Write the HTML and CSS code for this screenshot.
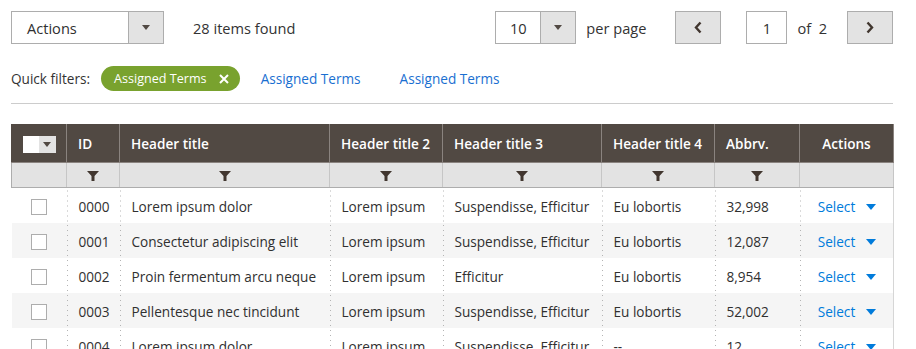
FILE: index.html
```html
<!DOCTYPE html>
<html lang="en">
<head>
<meta charset="UTF-8">
<meta name="viewport" content="width=device-width, initial-scale=1.0">
<title>Data Grid</title>
<link rel="stylesheet" href="styles.css">
</head>
<body>

<div class="page">
    <div class="toolbar">
        <div class="toolbar-left">
            <div class="select actions-select">
                <span class="select-value">Actions</span>
                <span class="select-button"><span class="caret"></span></span>
            </div>
            <span class="found">28 items found</span>
        </div>
        <div class="toolbar-right">
            <div class="select perpage-select">
                <span class="select-value">10</span>
                <span class="select-button"><span class="caret"></span></span>
            </div>
            <span class="per-page">per page</span>
            <a href="#" class="pager-btn prev">
                <svg width="8" height="13" viewBox="0 0 8 13"><path d="M6.5 1.5 L2 6.5 L6.5 11.5" fill="none" stroke="#41362f" stroke-width="2.4"/></svg>
            </a>
            <input type="text" class="page-input" value="1">
            <span class="page-of">of&nbsp; 2</span>
            <a href="#" class="pager-btn next">
                <svg width="8" height="13" viewBox="0 0 8 13"><path d="M1.5 1.5 L6 6.5 L1.5 11.5" fill="none" stroke="#41362f" stroke-width="2.4"/></svg>
            </a>
        </div>
    </div>

    <div class="quick-filters">
        <span class="qf-label">Quick filters:</span>
        <span class="qf-pill">Assigned Terms
            <svg width="10" height="10" viewBox="0 0 10 10"><path d="M1 1 L9 9 M9 1 L1 9" stroke="#fff" stroke-width="2"/></svg>
        </span>
        <a href="#" class="qf-link">Assigned Terms</a>
        <a href="#" class="qf-link">Assigned Terms</a>
    </div>

    <table class="grid">
        <colgroup>
            <col style="width:55px">
            <col style="width:53px">
            <col style="width:210px">
            <col style="width:113px">
            <col style="width:159px">
            <col style="width:113px">
            <col style="width:85px">
            <col style="width:94px">
        </colgroup>
        <thead>
            <tr class="head-row">
                <th class="col-check">
                    <span class="multi"><span class="multi-box"></span><span class="multi-btn"><span class="caret"></span></span></span>
                </th>
                <th>ID</th>
                <th>Header title</th>
                <th>Header title 2</th>
                <th>Header title 3</th>
                <th>Header title 4</th>
                <th>Abbrv.</th>
                <th class="center">Actions</th>
            </tr>
            <tr class="filter-row">
                <td></td>
                <td><svg class="funnel" width="12" height="10" viewBox="0 0 12 10"><path d="M0 0 H12 L7.5 5 V10 H4.5 V5 Z" fill="#41362f"/></svg></td>
                <td><svg class="funnel" width="12" height="10" viewBox="0 0 12 10"><path d="M0 0 H12 L7.5 5 V10 H4.5 V5 Z" fill="#41362f"/></svg></td>
                <td><svg class="funnel" width="12" height="10" viewBox="0 0 12 10"><path d="M0 0 H12 L7.5 5 V10 H4.5 V5 Z" fill="#41362f"/></svg></td>
                <td><svg class="funnel" width="12" height="10" viewBox="0 0 12 10"><path d="M0 0 H12 L7.5 5 V10 H4.5 V5 Z" fill="#41362f"/></svg></td>
                <td><svg class="funnel" width="12" height="10" viewBox="0 0 12 10"><path d="M0 0 H12 L7.5 5 V10 H4.5 V5 Z" fill="#41362f"/></svg></td>
                <td><svg class="funnel" width="12" height="10" viewBox="0 0 12 10"><path d="M0 0 H12 L7.5 5 V10 H4.5 V5 Z" fill="#41362f"/></svg></td>
                <td></td>
            </tr>
        </thead>
        <tbody>
            <tr>
                <td class="col-check"><span class="checkbox"></span></td>
                <td>0000</td>
                <td>Lorem ipsum dolor</td>
                <td>Lorem ipsum</td>
                <td>Suspendisse, Efficitur</td>
                <td>Eu lobortis</td>
                <td>32,998</td>
                <td class="center"><a href="#" class="select-link">Select <span class="caret blue"></span></a></td>
            </tr>
            <tr>
                <td class="col-check"><span class="checkbox"></span></td>
                <td>0001</td>
                <td>Consectetur adipiscing elit</td>
                <td>Lorem ipsum</td>
                <td>Suspendisse, Efficitur</td>
                <td>Eu lobortis</td>
                <td>12,087</td>
                <td class="center"><a href="#" class="select-link">Select <span class="caret blue"></span></a></td>
            </tr>
            <tr>
                <td class="col-check"><span class="checkbox"></span></td>
                <td>0002</td>
                <td>Proin fermentum arcu neque</td>
                <td>Lorem ipsum</td>
                <td>Efficitur</td>
                <td>Eu lobortis</td>
                <td>8,954</td>
                <td class="center"><a href="#" class="select-link">Select <span class="caret blue"></span></a></td>
            </tr>
            <tr>
                <td class="col-check"><span class="checkbox"></span></td>
                <td>0003</td>
                <td>Pellentesque nec tincidunt</td>
                <td>Lorem ipsum</td>
                <td>Suspendisse, Efficitur</td>
                <td>Eu lobortis</td>
                <td>52,002</td>
                <td class="center"><a href="#" class="select-link">Select <span class="caret blue"></span></a></td>
            </tr>
            <tr>
                <td class="col-check"><span class="checkbox"></span></td>
                <td>0004</td>
                <td>Lorem ipsum dolor</td>
                <td>Lorem ipsum</td>
                <td>Suspendisse, Efficitur</td>
                <td>--</td>
                <td>12</td>
                <td class="center"><a href="#" class="select-link">Select <span class="caret blue"></span></a></td>
            </tr>
        </tbody>
    </table>
</div>

</body>
</html>
```

FILE: styles.css
```css
body {
    font-family: "Open Sans", Arial, sans-serif;
    margin: 0;
    padding: 0;
    color: #303030;
    background: #fff;
}
.page {
    width: 882px;
    padding: 11px 0 0 11px;
}

/* top toolbar */
.toolbar {
    display: flex;
    justify-content: space-between;
    align-items: center;
    height: 33px;
}
.toolbar-left,
.toolbar-right {
    display: flex;
    align-items: center;
    height: 100%;
}
.select {
    display: flex;
    height: 33px;
    box-sizing: border-box;
    border: 1px solid #adadad;
    background: #fff;
    font-size: 14.6px;
}
.select-value {
    flex: 1;
    display: flex;
    align-items: center;
}
.select-button {
    width: 34px;
    display: flex;
    align-items: center;
    justify-content: center;
    background: #e3e3e3;
    border-left: 1px solid #adadad;
}
.caret {
    display: inline-block;
    width: 0;
    height: 0;
    border-left: 4px solid transparent;
    border-right: 4px solid transparent;
    border-top: 5px solid #514943;
}
.caret.blue {
    border-left: 5px solid transparent;
    border-right: 5px solid transparent;
    border-top: 6px solid #007bdb;
    margin-left: 7px;
    vertical-align: 2px;
}
.actions-select {
    width: 153px;
}
.actions-select .select-value {
    padding-left: 15px;
}
.found {
    margin-left: 29px;
    font-size: 14.6px;
    color: #333;
}
.perpage-select {
    width: 81px;
}
.perpage-select .select-value {
    justify-content: center;
}
.per-page {
    margin-left: 10px;
    font-size: 14.6px;
    color: #333;
}
.pager-btn {
    width: 46px;
    height: 33px;
    box-sizing: border-box;
    border: 1px solid #adadad;
    background: #e3e3e3;
    display: flex;
    align-items: center;
    justify-content: center;
}
.prev {
    margin-left: 29px;
}
.page-input {
    width: 41px;
    height: 33px;
    box-sizing: border-box;
    margin: 0 0 0 25px;
    border: 1px solid #adadad;
    text-align: center;
    font-family: inherit;
    font-size: 14.6px;
    color: #303030;
    padding: 0;
}
.page-of {
    margin: 0 20px 0 10px;
    font-size: 14.6px;
    color: #333;
}

/* quick filters */
.quick-filters {
    display: flex;
    align-items: center;
    margin-top: 22px;
    height: 25px;
    padding-bottom: 12px;
    border-bottom: 1px solid #ccc;
    font-size: 13.6px;
}
.qf-label {
    color: #333;
}
.qf-pill {
    display: flex;
    align-items: center;
    height: 25px;
    box-sizing: border-box;
    margin-left: 11px;
    padding: 0 11px 0 13px;
    border-radius: 13px;
    background: #79a22e;
    color: #fff;
    font-size: 12.6px;
}
.qf-pill svg {
    margin-left: 12px;
}
.qf-link {
    margin-left: 21px;
    color: #1a6fd1;
    text-decoration: none;
}
.qf-link + .qf-link {
    margin-left: 39px;
}

/* grid */
.grid {
    margin-top: 20px;
    width: 882px;
    table-layout: fixed;
    border-collapse: collapse;
    font-size: 13.6px;
}
.head-row th {
    background: #514943;
    color: #fff;
    font-weight: 600;
    text-align: left;
    height: 38px;
    padding: 0 11px 1px;
    box-sizing: border-box;
    border: 1px solid #8a837f;
    border-top-color: #514943;
    white-space: nowrap;
}
.head-row th:first-child {
    border-left-color: #514943;
}
.grid th.center,
.grid td.center {
    text-align: center;
}
.grid .col-check {
    text-align: center;
    padding: 0;
}
.multi {
    display: inline-flex;
    vertical-align: middle;
    height: 17px;
}
.multi-box {
    width: 16px;
    background: #fff;
}
.multi-btn {
    width: 17px;
    background: #e3e3e3;
    display: flex;
    align-items: center;
    justify-content: center;
}
.filter-row td {
    background: #e3e3e3;
    height: 24px;
    padding: 0;
    text-align: center;
    border: 1px solid #c6c6c6;
    border-bottom-color: #adadad;
}
.filter-row td:first-child {
    border-left-color: #adadad;
}
.funnel {
    display: block;
    margin: 1px auto 0;
}
.grid tbody td {
    height: 35px;
    padding: 2px 11px 0 12px;
    box-sizing: border-box;
    white-space: nowrap;
    overflow: hidden;
    background-color: #fff;
    background-image: linear-gradient(to bottom, #b4b4b4 1px, transparent 1px);
    background-size: 1px 5px;
    background-repeat: repeat-y;
    background-position: left 2px;
}
.grid tbody td:first-child {
    background-image: none;
}
.grid tbody td:last-child {
    border-right: 1px solid #d6d6d6;
}
.grid tbody tr:nth-child(even) td {
    background-color: #f5f5f5;
}
.checkbox {
    display: inline-block;
    width: 14px;
    height: 14px;
    border: 1px solid #adadad;
    background: #fff;
    vertical-align: middle;
}
.select-link {
    color: #007bdb;
    text-decoration: none;
}
```
